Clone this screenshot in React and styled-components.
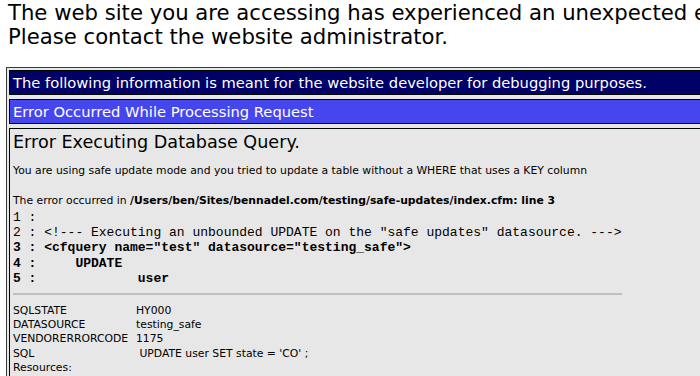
import React from 'react';
import styled, { createGlobalStyle } from 'styled-components';

//----------------Styling-------------------------//

const GlobalStyle = createGlobalStyle`
  html, body {
    margin: 0;
    overflow: hidden;
    background: #ffffff;
  }
  body {
    padding: 1px 8px 0 6px;
    font-family: "DejaVu Sans", Verdana, sans-serif;
    color: #000;
  }
`

const Page = styled.div`
  width: 900px;
`

const Notice = styled.div`
  font-size: 21.2px;
  line-height: 24px;
  padding-left: 2px;
  margin-bottom: 18px;
`

const DebugTable = styled.div`
  display: flex;
  flex-direction: column;
  gap: 4px;
  padding: 2px;
  border: 1px solid #3a3a3a;
  background: #e7e7e7;
`

const Cell = styled.div`
  border: 1px solid #000808;
  background: ${p => p.$bg || '#e7e7e7'};
  color: ${p => (p.$bg ? '#ffffff' : '#000')};
  padding: 3px;
  font-size: ${p => (p.$bg ? '14.7px' : '10.8px')};
  line-height: ${p => (p.$bg ? '17px' : '15px')};
`

const Title = styled.h1`
  margin: 0 0 10px;
  font-weight: normal;
  font-size: 17.6px;
  line-height: 21px;
`

const Para = styled.div`
  margin-bottom: ${p => p.$gap || 0}px;
`

const Code = styled.div`
  display: inline-block;
  margin-top: 2px;
  font-family: "Liberation Mono", "Courier New", monospace;
  font-size: 13px;
  line-height: 15.2px;
  white-space: pre;
`

const CodeLine = styled.div`
  font-weight: ${p => (p.$hot ? 'bold' : 'normal')};
`

const Rule = styled.hr`
  margin: 7px 0 5px;
  border: 0;
  height: 2px;
  background: #c0c0c0;
`

const Details = styled.div`
  display: grid;
  grid-template-columns: 123px auto;
  grid-auto-rows: 14.2px;
  line-height: 14.2px;
  white-space: pre;
`

//-------------Component Function-----------------//

const code = [
  { n: 1, text: '' },
  { n: 2, text: '<!--- Executing an unbounded UPDATE on the "safe updates" datasource. --->' },
  { n: 3, text: '<cfquery name="test" datasource="testing_safe">', hot: true },
  { n: 4, text: '    UPDATE', hot: true },
  { n: 5, text: '            user', hot: true },
]

const details = [
  ['SQLSTATE', 'HY000'],
  ['DATASOURCE', 'testing_safe'],
  ['VENDORERRORCODE', '1175'],
  ['SQL', " UPDATE user SET state = 'CO' ;"],
  ['Resources:', ''],
]

const App = () => {
  return (
    <Page>
      <GlobalStyle />
      <Notice>
        The web site you are accessing has experienced an unexpected error.<br />
        Please contact the website administrator.
      </Notice>
      <DebugTable>
        <Cell $bg="#000066">
          The following information is meant for the website developer for debugging purposes.
        </Cell>
        <Cell $bg="#4646ee">Error Occurred While Processing Request</Cell>
        <Cell>
          <Title>Error Executing Database Query.</Title>
          <Para $gap={15}>
            You are using safe update mode and you tried to update a table without a WHERE that uses a KEY column
          </Para>
          <Para>
            The error occurred in <b>/Users/ben/Sites/bennadel.com/testing/safe-updates/index.cfm: line 3</b>
          </Para>
          <Code>
            {code.map(line => (
              <CodeLine key={line.n} $hot={line.hot}>
                {line.n + ' : ' + line.text}
              </CodeLine>
            ))}
            <Rule />
          </Code>
          <Details>
            {details.map(([k, v]) => (
              <React.Fragment key={k}>
                <span>{k}</span>
                <span>{v}</span>
              </React.Fragment>
            ))}
          </Details>
        </Cell>
      </DebugTable>
    </Page>
  )
}

export default App
